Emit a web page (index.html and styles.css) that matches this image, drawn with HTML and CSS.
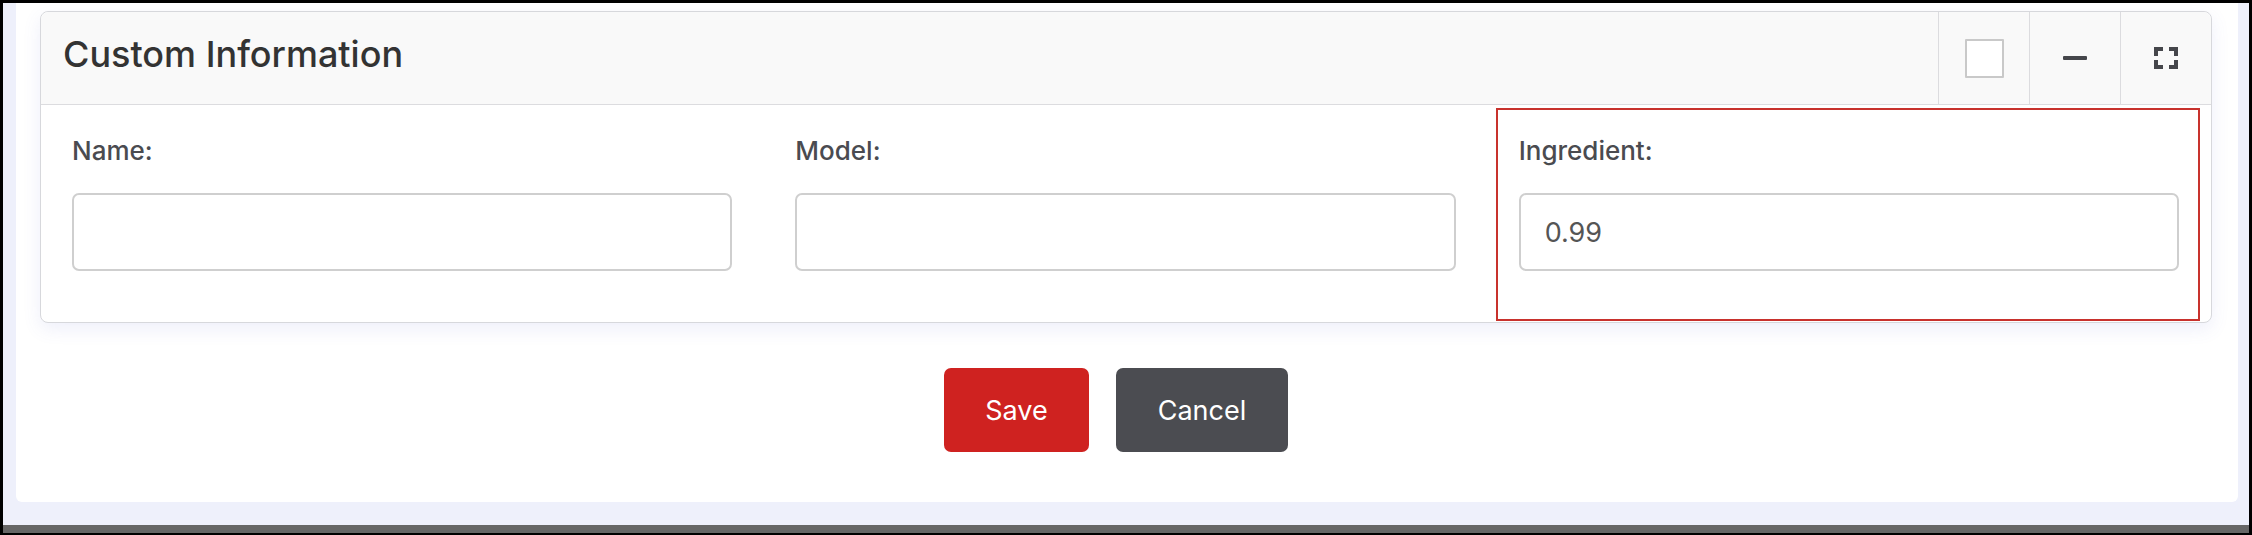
FILE: index.html
```html
<!DOCTYPE html>
<html>
<head>
<meta charset="utf-8">
<link rel="stylesheet" href="styles.css">
</head>
<body>
<div class="frame">
  <div class="panel">
    <div class="card">
      <div class="card-header">
        <h3 class="card-title">Custom Information</h3>
        <div class="tools">
          <div class="tool"><span class="check"></span></div>
          <div class="tool"><span class="minus"></span></div>
          <div class="tool">
            <svg class="expand" width="24" height="22" viewBox="0 0 24 22">
              <path d="M2 9V2h7M15 2h7v7M22 13v7h-7M9 20H2v-7" fill="none" stroke="#45464b" stroke-width="4" stroke-linejoin="miter"/>
            </svg>
          </div>
        </div>
      </div>
      <div class="card-body">
        <div class="col">
          <div class="field">
            <label class="label">Name:</label>
            <div class="input"></div>
          </div>
        </div>
        <div class="col">
          <div class="field">
            <label class="label">Model:</label>
            <div class="input"></div>
          </div>
        </div>
        <div class="col">
          <div class="field highlight">
            <label class="label">Ingredient:</label>
            <div class="input">0.99</div>
          </div>
        </div>
      </div>
    </div>
    <div class="actions">
      <button class="btn btn-save">Save</button>
      <button class="btn btn-cancel">Cancel</button>
    </div>
  </div>
  <div class="gap"></div>
  <div class="bottom-bar"></div>
</div>
</body>
</html>
```
FILE: styles.css
```css
* { box-sizing: border-box; }
html, body { margin: 0; padding: 0; }
body {
  background: #000;
  font-family: Inter, "Noto Sans", sans-serif;
  width: 2252px;
  height: 535px;
  overflow: hidden;
}
.frame {
  margin: 3px 3px 0 3px;
  height: 530px;
  background: #eef0fb;
  display: flex;
  flex-direction: column;
}
.panel {
  margin: 0 11px 0 13px;
  height: 499px;
  background: #fff;
  border-radius: 0 0 6px 6px;
  padding: 8px 26px 0 24px;
}
.gap { height: 23px; }
.bottom-bar { height: 8px; background: #666; }

.card {
  border: 1px solid #d7d8dc;
  border-radius: 8px;
  background: #fff;
  box-shadow: 0 6px 18px rgba(90, 100, 210, 0.10);
  height: 312px;
  display: flex;
  flex-direction: column;
}
.card-header {
  height: 93px;
  background: #f9f9f9;
  border-bottom: 1px solid #dcdcdf;
  border-radius: 8px 8px 0 0;
  display: flex;
  align-items: center;
  padding-left: 22px;
}
.card-title {
  margin: 0 0 8px 0;
  font-size: 36px;
  font-weight: 500;
  color: #333;
  flex: 1;
}
.tools { display: flex; height: 100%; }
.tool {
  width: 91px;
  height: 100%;
  border-left: 1px solid #dcdcdf;
  display: flex;
  align-items: center;
  justify-content: center;
}
.check {
  width: 39px;
  height: 39px;
  border: 2px solid #c9c9c9;
  background: #fff;
  border-radius: 1px;
}
.minus {
  width: 24px;
  height: 4px;
  background: #45464b;
  border-radius: 1px;
}

.card-body {
  flex: 1;
  display: grid;
  grid-template-columns: 1fr 1fr 1fr;
}
.col { padding: 3px 11px 1px 8px; }
.field {
  border: 2px solid transparent;
  padding: 22px 19px 48px 21px;
  height: 100%;
}
.field.highlight { border-color: #c8322d; }
.label {
  display: block;
  font-size: 26px;
  line-height: 38px;
  font-weight: 500;
  color: #4a4b50;
  margin-bottom: 23px;
}
.input {
  height: 78px;
  border: 2px solid #cfcfcf;
  border-radius: 7px;
  padding: 0 24px;
  display: flex;
  align-items: center;
  font-size: 27px;
  color: #555;
}

.actions {
  display: flex;
  justify-content: center;
  gap: 27px;
  margin-top: 45px;
  padding-right: 20px;
}
.btn {
  height: 84px;
  border: none;
  border-radius: 7px;
  font-family: Inter, "Noto Sans", sans-serif;
  font-size: 27px;
  color: #fff;
  padding: 0 40px;
}
.btn-save { background: #cf2220; width: 145px; }
.btn-cancel { background: #4b4c51; width: 172px; }
```
